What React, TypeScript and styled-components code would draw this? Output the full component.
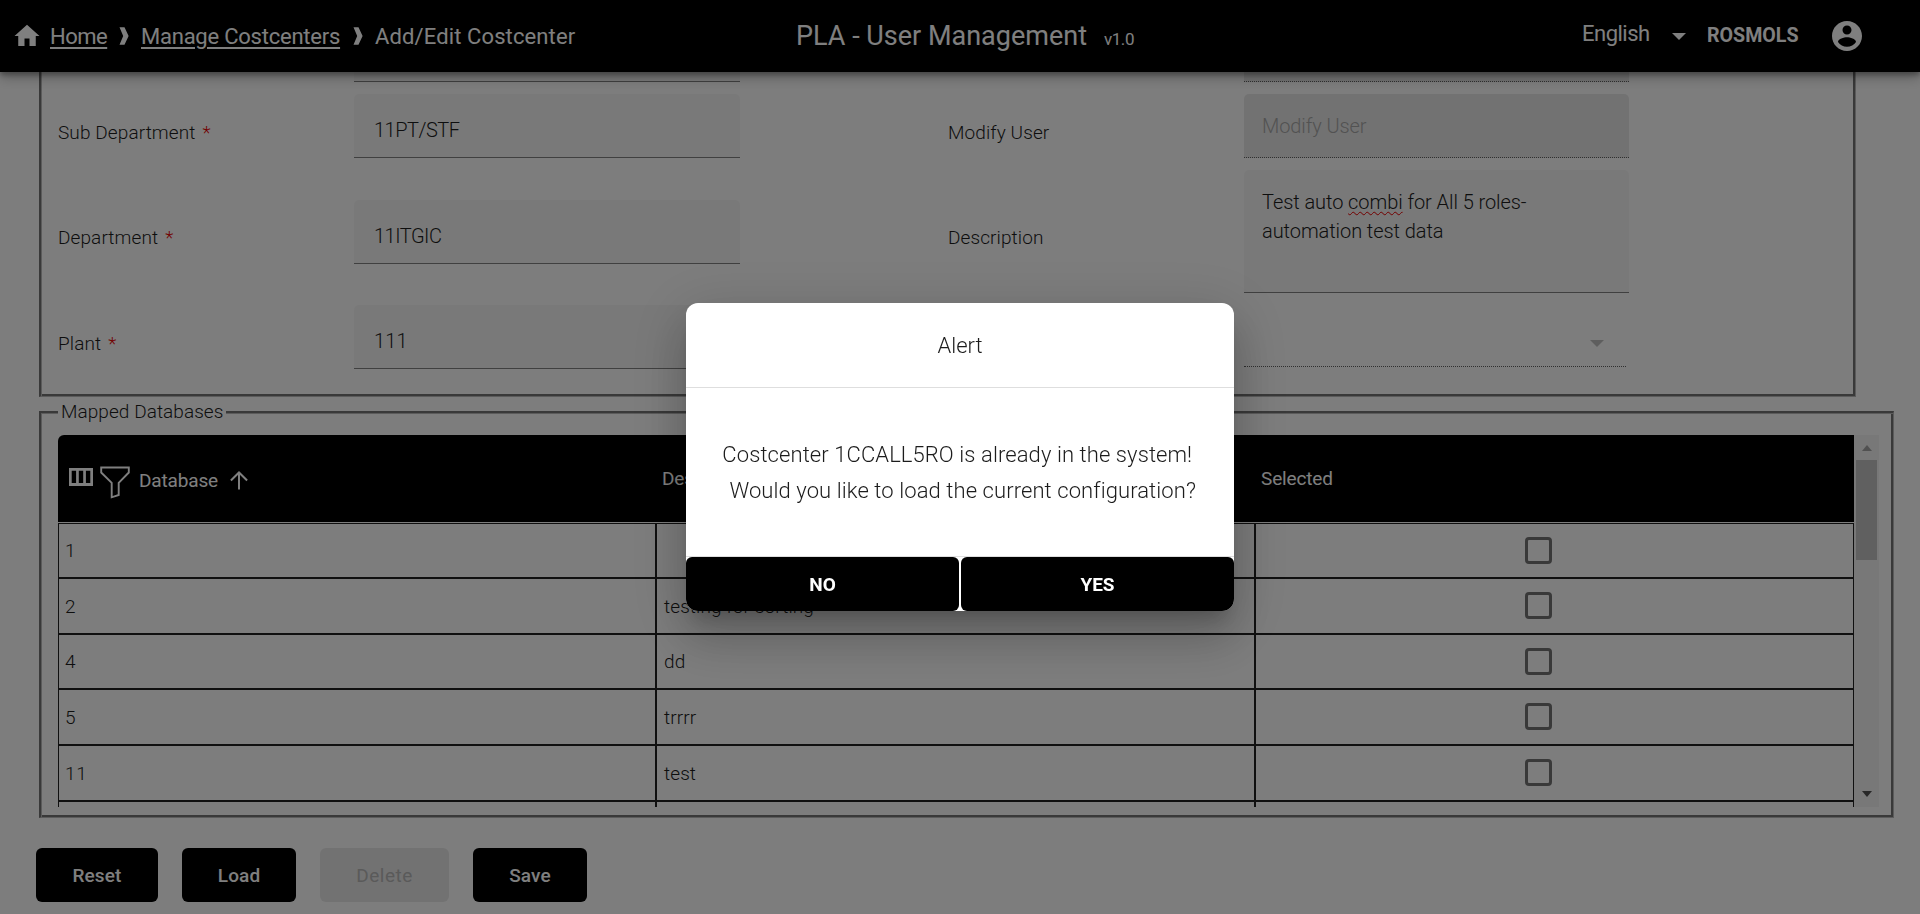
import React from "react";
import styled, { createGlobalStyle } from "styled-components";

const GlobalStyle = createGlobalStyle`
  *, *::before, *::after { box-sizing: border-box; }
  html, body { margin: 0; padding: 0; overflow: hidden; }
  body {
    font-family: Roboto, "Liberation Sans", sans-serif;
    font-weight: 300;
    font-size: 19px;
    color: #1c1c1c;
    background: #fbfbfb;
  }
`;

const Page = styled.div`
  display: flex;
  flex-direction: column;
  width: 1920px;
  height: 914px;
  overflow: hidden;
  background: #fbfbfb;
`;

const TopBar = styled.header`
  display: grid;
  grid-template-columns: 796px 1fr auto;
  align-items: center;
  flex: none;
  height: 72px;
  padding-right: 55px;
  background: #000;
  color: #fff;
  font-weight: 400;
  z-index: 1;
  box-shadow: 0 3px 5px rgba(0, 0, 0, 0.3), 0 6px 12px rgba(0, 0, 0, 0.24);
`;

const Breadcrumb = styled.nav`
  display: flex;
  align-items: center;
  padding-left: 12px;
  font-size: 22px;
  line-height: 30px;
  white-space: nowrap;

  svg { display: block; flex: none; }
`;

const Crumb = styled.a<{ $current?: boolean; $width: number; $track: number }>`
  width: ${(p) => p.$width}px;
  padding-top: 1px;
  letter-spacing: ${(p) => p.$track}px;
  color: inherit;
  text-decoration: ${(p) => (p.$current ? "none" : "underline")};
  text-decoration-thickness: 2px;
  text-underline-offset: 3px;
`;

const CrumbHome = styled.svg`
  margin-right: 8px;
`;

const CrumbArrow = styled.svg`
  margin: 0 12px;
`;

const AppTitle = styled.h1`
  margin: 2px 0 0;
  font-size: 27px;
  font-weight: 400;
  line-height: 36px;
  white-space: nowrap;
`;

const Version = styled.span`
  margin-left: 17px;
  font-size: 17px;
  letter-spacing: -0.45px;
`;

const UserArea = styled.div`
  display: flex;
  align-items: center;
  svg { display: block; }
`;

const Language = styled.span`
  width: 68px;
  font-size: 22px;
  letter-spacing: -0.5px;
  line-height: 30px;
  padding-bottom: 4px;
`;

const Caret = styled.span<{ $color: string }>`
  width: 0;
  height: 0;
  border: 7.5px solid transparent;
  border-bottom: 0;
  border-top-color: ${(p) => p.$color};
`;

const LanguageCaret = styled(Caret)`
  margin: 1px 21px 0 22px;
`;

const UserName = styled.span`
  width: 92px;
  margin: 0 30px 1px 0;
  font-size: 19.6px;
  font-weight: 700;
`;

const Content = styled.main`
  display: flex;
  flex-direction: column;
  align-items: flex-start;
  flex: 1;
  padding-left: 39px;
`;

const Group = styled.section<{ $open?: boolean }>`
  position: relative;
  border: solid;
  border-width: ${(p) => (p.$open ? "0 1px 1px 2px" : "2px 1px 1px 2px")};
  border-color: #727272 #b6b6b6 #b6b6b6 #727272;
  box-shadow: inset ${(p) => (p.$open ? "1px 0" : "1px 1px")} 0 #b6b6b6, inset -2px -2px 0 #727272;
`;

const FormGroup = styled(Group)`
  display: grid;
  grid-template-columns: 296px 594px 296px 385px;
  grid-template-rows: 10px 64px 123px 64px;
  row-gap: 12px;
  align-items: center;
  width: 1817px;
  height: 325px;
  padding-left: 17px;
`;

const TableGroup = styled(Group)`
  width: 1855px;
  height: 407px;
  margin-top: 14px;
  padding: 22px 0 0 17px;
`;

const Legend = styled.h2`
  position: absolute;
  top: -14px;
  left: 17px;
  width: 168px;
  margin: 0;
  padding-left: 3px;
  background: #fbfbfb;
  font-size: 19px;
  font-weight: 300;
  line-height: 26px;
  letter-spacing: 0.06px;
  white-space: nowrap;
`;

const Label = styled.label`
  padding-top: 12px;
  letter-spacing: 0.1px;
`;

const Required = styled.span`
  margin-left: 7px;
  color: #e60000;
`;

const Field = styled.div<{ $disabled?: boolean; $track?: number }>`
  display: flex;
  align-items: center;
  width: 386px;
  height: 64px;
  padding: 9px 20px 0;
  border-radius: 5px 5px 0 0;
  border-bottom: 1px ${(p) => (p.$disabled ? "dotted #606060" : "solid #808080")};
  background: ${(p) => (p.$disabled ? "#e5e5e5" : "#f3f3f3")};
  font-size: 20px;
  letter-spacing: ${(p) => p.$track ?? -0.5}px;
`;

const ClippedField = styled(Field)`
  height: 10px;
  padding: 0;
  border-radius: 0;
`;

const ClippedDisabledField = styled(ClippedField)`
  width: 385px;
`;

const Placeholder = styled(Field)`
  width: 385px;
  padding: 0 18px;
  letter-spacing: -0.1px;
  color: #a4a4a4;
`;

const TextArea = styled(Field)`
  display: block;
  width: 385px;
  height: 123px;
  padding: 18px 18px 0;
  line-height: 29px;
  letter-spacing: -0.07px;
`;

const Misspelled = styled.span`
  text-decoration: underline wavy #e60000 1.3px;
  text-underline-offset: 2px;
  text-decoration-skip-ink: none;
`;

const SelectField = styled.div`
  display: flex;
  align-items: center;
  justify-content: flex-end;
  align-self: start;
  width: 382px;
  height: 62px;
  padding: 15px 22px 0 0;
  border-bottom: 1px dotted #606060;
`;

const TableView = styled.div`
  display: flex;
  width: 1821px;
  height: 372px;
  overflow: hidden;
`;

const Table = styled.div`
  width: 1796px;
`;

const HeaderRow = styled.div`
  display: grid;
  grid-template-columns: 599px 599px 598px;
  height: 87px;
  margin-bottom: 1px;
  border-radius: 6px 0 0 0;
  background: #000;
  color: #fff;
  font-weight: 400;
`;

const HeaderCell = styled.div`
  display: flex;
  align-items: center;
  padding-left: 5px;
  letter-spacing: -0.15px;
`;

const MainHeaderCell = styled(HeaderCell)`
  padding: 3px 0 0 11px;
`;

const ColumnsIcon = styled.svg`
  margin: 0 7px 7px 0;
`;

const FunnelIcon = styled.svg`
  margin: 5px 9px 0 0;
`;

const SortIcon = styled.svg`
  margin-left: 11.5px;
`;

const Row = styled.div<{ $height: number; $first?: boolean }>`
  display: grid;
  grid-template-columns: 599px 599px 598px;
  height: ${(p) => p.$height}px;
  border-left: 1px solid #202020;
  border-top: ${(p) => (p.$first ? "1px solid #202020" : "0")};
  border-bottom: 2px solid #202020;
  width: 1796px;
`;

const Cell = styled.div`
  display: flex;
  align-items: center;
  padding-left: 7px;
  letter-spacing: 0.1px;
  border-right: 2px solid #202020;

  &:first-child { width: 598px; padding-left: 6px; letter-spacing: 0.6px; }
  &:nth-child(2) { width: 599px; margin-left: -1px; }
`;

const CheckCell = styled(Cell)`
  justify-content: center;
  width: 598px;
  margin-left: -1px;
  padding: 0 32px 1px 0;
  border-right-width: 1px;
`;

const Checkbox = styled.span`
  width: 27px;
  height: 27px;
  border: 3px solid #737373;
  border-radius: 4px;
`;

const Scrollbar = styled.div`
  display: flex;
  flex-direction: column;
  align-items: center;
  width: 25px;
  background: #f1f1f1;
`;

const ScrollUp = styled.span`
  margin: 10px 0 9px;
  border: 5.5px solid transparent;
  border-top: 0;
  border-bottom: 6px solid #a3a3a3;
`;

const ScrollThumb = styled.span`
  width: 21px;
  height: 100px;
  background: #c1c1c1;
`;

const ScrollDown = styled.span`
  margin: auto 0 10px;
  border: 5.5px solid transparent;
  border-bottom: 0;
  border-top: 6px solid #505050;
`;

const Actions = styled.div`
  display: flex;
  gap: 24px;
  margin: 30px 0 0 -3px;
`;

const ActionButton = styled.button<{ $width: number }>`
  width: ${(p) => p.$width}px;
  height: 54px;
  padding: 0;
  border: 0;
  border-radius: 6px;
  background: #000;
  color: #fff;
  font: 500 19px Roboto, "Liberation Sans", sans-serif;
  letter-spacing: 0.1px;

  &:disabled { background: #e5e5e5; color: #b4b4b4; font-weight: 400; letter-spacing: 0.5px; }
`;

const Backdrop = styled.div`
  position: fixed;
  inset: 0;
  z-index: 10;
  display: flex;
  justify-content: center;
  align-items: center;
  background: rgba(0, 0, 0, 0.5);
`;

const Dialog = styled.div`
  display: flex;
  flex-direction: column;
  width: 548px;
  height: 308px;
  border-radius: 12px;
  overflow: hidden;
  background: #fff;
  font-size: 22px;
  box-shadow: 0 14px 18px -8px rgba(0, 0, 0, 0.2), 0 29px 46px 4px rgba(0, 0, 0, 0.14),
    0 11px 56px 10px rgba(0, 0, 0, 0.12);
`;

const DialogTitle = styled.div`
  display: flex;
  align-items: center;
  justify-content: center;
  height: 85px;
  border-bottom: 1px solid #dedede;
`;

const DialogBody = styled.div`
  flex: 1;
  padding-top: 49px;
  border-bottom: 1px solid #dedede;
  text-align: center;
  line-height: 36px;
  letter-spacing: 0.09px;
  white-space: pre;
`;

const DialogActions = styled.div`
  display: grid;
  grid-template-columns: 1fr 1fr;
  gap: 2px;
  height: 54px;
`;

const DialogButton = styled.button`
  border: 0;
  border-radius: 6px;
  background: #000;
  color: #fff;
  font: 700 19px Roboto, "Liberation Sans", sans-serif;
`;

const rows = [
  { id: "1", description: "", height: 56 },
  { id: "2", description: "testing for sorting", height: 56 },
  { id: "4", description: "dd", height: 55 },
  { id: "5", description: "trrrr", height: 56 },
  { id: "11", description: "test", height: 56 },
  { id: "", description: "", height: 56 },
];

const Separator = () => (
  <CrumbArrow width="10" height="18" viewBox="0 0 10 18" fill="currentColor">
    <path d="M0.5 0.3h5L9.6 9 5.5 17.7h-5L4.2 9z" />
  </CrumbArrow>
);

export default function App() {
  return (
    <>
      <GlobalStyle />
      <Page>
        <TopBar>
          <Breadcrumb>
            <CrumbHome width="30" height="30" viewBox="0 0 24 24" fill="currentColor">
              <path d="M10 20v-6h4v6h5v-8h3L12 3 2 12h3v8z" />
            </CrumbHome>
            <Crumb $width={57} $track={-0.5}>Home</Crumb>
            <Separator />
            <Crumb $width={200} $track={-0.23}>Manage Costcenters</Crumb>
            <Separator />
            <Crumb $current $width={202} $track={0.12}>Add/Edit Costcenter</Crumb>
          </Breadcrumb>
          <AppTitle>
            PLA - User Management<Version>v1.0</Version>
          </AppTitle>
          <UserArea>
            <Language>English</Language>
            <LanguageCaret $color="#fff" />
            <UserName>ROSMOLS</UserName>
            <svg width="36" height="36" viewBox="0 0 24 24" fill="currentColor">
              <path d="M12 2C6.48 2 2 6.48 2 12s4.48 10 10 10 10-4.48 10-10S17.52 2 12 2zm0 3c1.66 0 3 1.34 3 3s-1.34 3-3 3-3-1.34-3-3 1.34-3 3-3zm0 14.2c-2.5 0-4.71-1.28-6-3.22.03-1.99 4-3.08 6-3.08 1.99 0 5.97 1.09 6 3.08-1.29 1.94-3.5 3.22-6 3.22z" />
            </svg>
          </UserArea>
        </TopBar>

        <Content>
          <FormGroup $open>
            <span />
            <ClippedField />
            <span />
            <ClippedDisabledField $disabled />

            <Label>Sub Department<Required>*</Required></Label>
            <Field>11PT/STF</Field>
            <Label>Modify User</Label>
            <Placeholder $disabled>Modify User</Placeholder>

            <Label>Department<Required>*</Required></Label>
            <Field>11ITGIC</Field>
            <Label>Description</Label>
            <TextArea $track={-0.07}>
              Test auto <Misspelled>combi</Misspelled> for All 5 roles-
              <br />
              automation test data
            </TextArea>

            <Label>Plant<Required>*</Required></Label>
            <Field $track={0.2}>111</Field>
            <span />
            <SelectField>
              <Caret $color="#bdbdbd" />
            </SelectField>
          </FormGroup>

          <TableGroup>
            <Legend>Mapped Databases</Legend>
            <TableView>
              <Table>
                <HeaderRow>
                  <MainHeaderCell>
                    <ColumnsIcon width="24" height="18" viewBox="0 0 24 18" fill="currentColor" fillRule="evenodd">
                      <path d="M0 0h24v18H0zM2.7 2.7v12.4h4.4V2.7zM9.8 2.7v12.4h4.4V2.7zM16.9 2.7v12.4h4.4V2.7z" />
                    </ColumnsIcon>
                    <FunnelIcon width="30" height="33" viewBox="0 0 30 33" fill="none" stroke="currentColor" strokeWidth="1.9">
                      <path d="M1.2 1.5h27.6v5L18.7 16.8v12.2l-7 2.3V16.8L1.2 6.5z" />
                    </FunnelIcon>
                    Database
                    <SortIcon width="18" height="19" viewBox="0 0 18 19" fill="none" stroke="currentColor" strokeWidth="2">
                      <path d="M9 18.5V1.8M0.9 9.5L9 1.5l8.1 8" />
                    </SortIcon>
                  </MainHeaderCell>
                  <HeaderCell>Description</HeaderCell>
                  <HeaderCell>Selected</HeaderCell>
                </HeaderRow>
                {rows.map((row, i) => (
                  <Row key={i} $height={row.height} $first={i === 0}>
                    <Cell>{row.id}</Cell>
                    <Cell>{row.description}</Cell>
                    <CheckCell>
                      <Checkbox />
                    </CheckCell>
                  </Row>
                ))}
              </Table>
              <Scrollbar>
                <ScrollUp />
                <ScrollThumb />
                <ScrollDown />
              </Scrollbar>
            </TableView>
          </TableGroup>

          <Actions>
            <ActionButton $width={122}>Reset</ActionButton>
            <ActionButton $width={114}>Load</ActionButton>
            <ActionButton $width={129} disabled>Delete</ActionButton>
            <ActionButton $width={114}>Save</ActionButton>
          </Actions>
        </Content>
      </Page>

      <Backdrop>
        <Dialog role="dialog">
          <DialogTitle>Alert</DialogTitle>
          <DialogBody>
            {"Costcenter 1CCALL5RO is already in the system!\u00a0\n\u00a0Would you like to load the current configuration?"}
          </DialogBody>
          <DialogActions>
            <DialogButton>NO</DialogButton>
            <DialogButton>YES</DialogButton>
          </DialogActions>
        </Dialog>
      </Backdrop>
    </>
  );
}
